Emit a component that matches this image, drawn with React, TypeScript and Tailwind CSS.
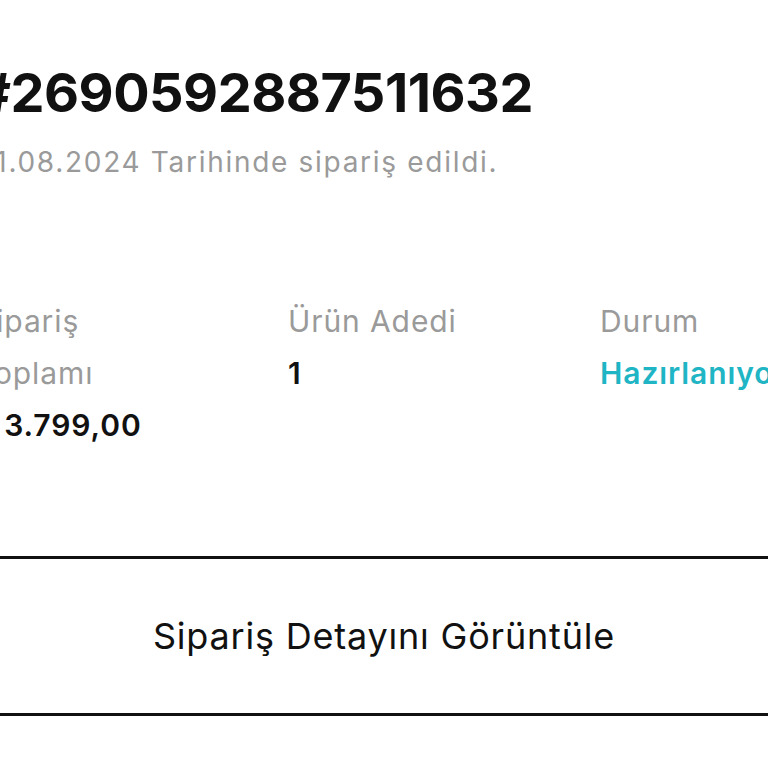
import React from 'react';

const stats = [
  { label: 'Sipariş Toplamı', value: '₺ 3.799,00', tone: 'text-[#111]', narrow: true },
  { label: 'Ürün Adedi', value: '1', tone: 'text-[#111]', narrow: false },
  { label: 'Durum', value: 'Hazırlanıyor', tone: 'text-[#1fb5c4]', narrow: false },
];

export default function App() {
  return (
    <div className="h-[768px] w-full overflow-hidden bg-white font-['Inter','Noto_Sans',sans-serif]">
      <div className="ml-[-24px] w-[816px] pt-[58px]">
        <h1 className="text-[54px] font-bold leading-[70px] tracking-[-0.5px] text-[#111]">
          #2690592887511632
        </h1>
        <p className="mt-[14px] text-[28px] leading-[40px] tracking-[1.7px] text-[#9a9a9a]">
          01.08.2024 Tarihinde sipariş edildi.
        </p>

        <div className="mt-[113px] flex">
          {stats.map((s) => (
            <div key={s.label} className="w-[312px] shrink-0 text-[30px] leading-[52px] tracking-[0.9px]">
              <div className={s.narrow ? 'max-w-[170px] text-[#9a9a9a]' : 'text-[#9a9a9a]'}>{s.label}</div>
              <div className={`font-semibold ${s.tone}`}>{s.value}</div>
            </div>
          ))}
        </div>

        <button className="mt-[105px] flex h-[160px] w-full items-center justify-center border-[3px] border-[#111] text-[36px] tracking-[0.8px] text-[#111]">
          Sipariş Detayını Görüntüle
        </button>
      </div>
    </div>
  );
}
